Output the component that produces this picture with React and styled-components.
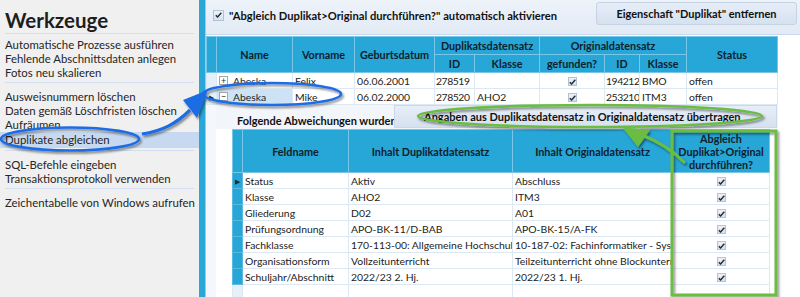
import React from 'react';
import styled, { createGlobalStyle } from 'styled-components';

const GlobalStyle = createGlobalStyle`
  html, body { margin: 0; padding: 0; background: #ffffff; }
  body { font-family: Lato, "Noto Sans", sans-serif; color: #1b1b1b; }
  * { box-sizing: border-box; }
`;

const HEADER_BLUE = '#27a6d8';
const LINE = '#dce8f3';

const sidebarGroups = [
	['Automatische Prozesse ausführen', 'Fehlende Abschnittsdaten anlegen', 'Fotos neu skalieren'],
	['Ausweisnummern löschen', 'Daten gemäß Löschfristen löschen', 'Aufräumen', 'Duplikate abgleichen'],
	['SQL-Befehle eingeben', 'Transaktionsprotokoll verwenden'],
	['Zeichentabelle von Windows aufrufen'],
];

const persons = [
	{ sign: '+', name: 'Abeska', first: 'Felix', born: '06.06.2001', dupId: '278519', dupClass: '', origId: '194212', origClass: 'BMO', status: 'offen' },
	{ sign: '−', name: 'Abeska', first: 'Mike', born: '06.02.2000', dupId: '278520', dupClass: 'AHO2', origId: '253210', origClass: 'ITM3', status: 'offen', current: true },
];

const diffs = [
	['Status', 'Aktiv', 'Abschluss'],
	['Klasse', 'AHO2', 'ITM3'],
	['Gliederung', 'D02', 'A01'],
	['Prüfungsordnung', 'APO-BK-11/D-BAB', 'APO-BK-15/A-FK'],
	['Fachklasse', '170-113-00: Allgemeine Hochschulreife', '10-187-02: Fachinformatiker - Systemintegration'],
	['Organisationsform', 'Vollzeitunterricht', 'Teilzeitunterricht ohne Blockunterricht'],
	['Schuljahr/Abschnitt', '2022/23 2. Hj.', '2022/23 1. Hj.'],
];

const Page = styled.div`
	position: relative;
	width: 800px;
	height: 297px;
	display: flex;
	overflow: hidden;
	background: #ffffff;
`;

const Sidebar = styled.aside`
	width: 199px;
	flex-shrink: 0;
	background: #f0f0f0;
	padding-top: 9px;
`;

const SideTitle = styled.h1`
	margin: 0 5px;
	padding: 1px 0 2px;
	font-size: 20.5px;
	font-weight: 700;
	line-height: 21px;
	color: #1e1e1e;
	border-bottom: 1px solid #d2dff0;
`;

const SideGroup = styled.ul`
	list-style: none;
	margin: 0 5px;
	padding: ${(p) => (p.first ? '4px 0 2px' : '7px 0 2px')};
	border-bottom: ${(p) => (p.last ? 'none' : '1px solid #d2dff0')};
`;

const SideItem = styled.li`
	margin: 0 -5px;
	padding: 0 5px;
	font-size: 11.4px;
	line-height: 14px;
	white-space: nowrap;
	color: #262626;
	background: ${(p) => (p.active ? '#c6d9f0' : 'transparent')};
	${(p) => p.active && 'padding-top: 1px; padding-bottom: 1px;'}
`;

const Splitter = styled.div`
	width: 7px;
	flex-shrink: 0;
	background: #29a7d9;
	border-right: 1px solid #8fd0ee;
`;

const Main = styled.main`
	flex: 1;
	display: flex;
	flex-direction: column;
	min-width: 0;
`;

const TopBar = styled.div`
	height: 35px;
	flex-shrink: 0;
	display: flex;
	align-items: center;
	padding: 0 3px 4px 7px;
	background: linear-gradient(#eef3fa, #e2eaf5);
	border-bottom: 1px solid #ccd9ea;
`;

const CheckLabel = styled.label`
	display: flex;
	align-items: center;
	gap: 5px;
	font-size: 11.2px;
	font-weight: 700;
	color: #111;
	white-space: nowrap;
`;

const Spacer = styled.div`
	flex: 1;
`;

const Button = styled.button`
	height: 23px;
	padding: 0 10px;
	font-family: inherit;
	font-size: 11px;
	font-weight: 700;
	color: #111;
	white-space: nowrap;
	border: 1px solid #c4d2e3;
	border-radius: 3px;
	background: linear-gradient(#e6eef8, #d6e1ef);
`;

const TopButton = styled(Button)`
	width: 201px;
	margin-top: -4px;
`;

const GridArea = styled.div`
	flex: 1;
	min-height: 0;
	padding-top: 1px;
	display: flex;
	flex-direction: column;
	width: 572px;
`;

const Table = styled.table`
	border-collapse: collapse;
	table-layout: fixed;
	font-size: 10.4px;
	width: ${(p) => p.w}px;
	flex-shrink: 0;
`;

const Th = styled.th`
	background: ${HEADER_BLUE};
	color: #10202a;
	font-weight: 700;
	font-size: 10.8px;
	line-height: 13px;
	height: ${(p) => p.h || 18}px;
	padding: 0 2px;
	border: 1px solid #79c6e8;
	text-align: center;
	white-space: nowrap;
`;

const Td = styled.td`
	height: 16px;
	padding: 0 ${(p) => (p.tight ? 1 : 2)}px;
	line-height: 14px;
	border: 1px solid ${LINE};
	white-space: nowrap;
	overflow: hidden;
	text-overflow: clip;
	text-align: ${(p) => (p.center ? 'center' : 'left')};
	background: ${(p) => (p.selected ? '#cde2f4' : '#ffffff')};
	color: #222;
	letter-spacing: ${(p) => (p.tight ? '-0.45px' : 'normal')};
`;

const RowHead = styled.td`
	height: 16px;
	padding: 0;
	border: 1px solid ${(p) => (p.blue ? '#5cb9e2' : LINE)};
	background: ${(p) => (p.blue ? HEADER_BLUE : '#e6f0f9')};
	text-align: center;
	font-size: 7px;
	line-height: 14px;
	color: #1d2e3a;
`;

const NameInner = styled.span`
	display: flex;
	align-items: center;
	gap: 5px;
`;

const ExpandBox = styled.span`
	width: 9px;
	height: 9px;
	border: 1px solid #a6a6a6;
	background: #fff;
	font-size: 9px;
	line-height: 7px;
	text-align: center;
	color: #333;
	flex-shrink: 0;
`;

const CheckBox = styled.span`
	display: inline-flex;
	align-items: center;
	justify-content: center;
	width: ${(p) => p.size || 9}px;
	height: ${(p) => p.size || 9}px;
	border: 1px solid #b3c3d6;
	background: linear-gradient(#eef3f9, #d5e0ec);
	vertical-align: middle;
`;

const Detail = styled.div`
	flex: 1;
	display: flex;
	flex-direction: column;
	padding-left: 16px;
	border-left: 10px solid #f4f8fc;
	background: #ffffff;
`;

const DetailBar = styled.div`
	height: 24px;
	flex-shrink: 0;
	display: flex;
	align-items: flex-end;
	background: #f2f5f9;
	margin-left: -16px;
	padding-left: 21px;
`;

const DetailLabel = styled.div`
	width: 157px;
	overflow: hidden;
	white-space: nowrap;
	font-size: 11px;
	font-weight: 700;
	line-height: 17px;
	color: #111;
`;

const CopyButton = styled(Button)`
	width: 383px;
	height: 23px;
	border-radius: 0;
	border-color: #cbd8e7;
	padding-left: 29px;
	text-align: left;
	align-self: flex-start;
`;

const Annotations = styled.svg`
	position: absolute;
	left: 0;
	top: 0;
	pointer-events: none;
`;

function Check({ size }) {
	return (
		<CheckBox size={size}>
			<svg width="7" height="6" viewBox="0 0 7 6">
				<path d="M0.8 3.2 L2.6 5 L6.3 0.8" fill="none" stroke="#1c2a3a" strokeWidth="1.4" />
			</svg>
		</CheckBox>
	);
}

function Overlay() {
	return (
		<Annotations width="800" height="297" viewBox="0 0 800 297">
			<defs>
				<filter id="sh" x="-10%" y="-30%" width="120%" height="160%">
					<feDropShadow dx="1.5" dy="2" stdDeviation="1.2" floodColor="#000" floodOpacity="0.45" />
				</filter>
			</defs>
			<g filter="url(#sh)" fill="none" strokeWidth="2.6">
				<ellipse cx="70" cy="139" rx="69" ry="11.5" stroke="#1e6de3" />
				<ellipse cx="272" cy="94" rx="69" ry="11" stroke="#1e6de3" />
				<path d="M142 134 C 162 131, 176 124, 190 110" stroke="#1e6de3" strokeWidth="3.2" />
				<polygon points="208,90 183,100 197,118" fill="#1e6de3" stroke="none" />
				<ellipse cx="590" cy="116" rx="172" ry="11" stroke="#6bbd43" />
				<rect x="672" y="131" width="104" height="164" stroke="#6bbd43" strokeWidth="3" />
				<path d="M685 163 C 672 150, 660 142, 644 136" stroke="#6bbd43" strokeWidth="3" />
				<polygon points="622,127 650,130 638,147" fill="#6bbd43" stroke="none" />
			</g>
		</Annotations>
	);
}

export default function App() {
	return (
		<>
			<GlobalStyle />
			<Page>
				<Sidebar>
					<SideTitle>Werkzeuge</SideTitle>
					{sidebarGroups.map((group, gi) => (
						<SideGroup key={gi} first={gi === 0} last={gi === sidebarGroups.length - 1}>
							{group.map((item) => (
								<SideItem key={item} active={item === 'Duplikate abgleichen'}>
									{item}
								</SideItem>
							))}
						</SideGroup>
					))}
				</Sidebar>
				<Splitter />
				<Main>
					<TopBar>
						<CheckLabel>
							<Check size={11} />
							"Abgleich Duplikat&gt;Original durchführen?" automatisch aktivieren
						</CheckLabel>
						<Spacer />
						<TopButton>Eigenschaft "Duplikat" entfernen</TopButton>
					</TopBar>
					<GridArea>
						<Table w={571}>
							<colgroup>
								<col style={{ width: 10 }} />
								<col style={{ width: 76 }} />
								<col style={{ width: 62 }} />
								<col style={{ width: 80 }} />
								<col style={{ width: 40 }} />
								<col style={{ width: 65 }} />
								<col style={{ width: 65 }} />
								<col style={{ width: 35 }} />
								<col style={{ width: 47 }} />
								<col style={{ width: 91 }} />
							</colgroup>
							<thead>
								<tr>
									<Th rowSpan={2} />
									<Th rowSpan={2}>Name</Th>
									<Th rowSpan={2}>Vorname</Th>
									<Th rowSpan={2}>Geburtsdatum</Th>
									<Th colSpan={2}>Duplikatsdatensatz</Th>
									<Th colSpan={3}>Originaldatensatz</Th>
									<Th rowSpan={2}>Status</Th>
								</tr>
								<tr>
									<Th>ID</Th>
									<Th>Klasse</Th>
									<Th>gefunden?</Th>
									<Th>ID</Th>
									<Th>Klasse</Th>
								</tr>
							</thead>
							<tbody>
								{persons.map((p) => (
									<tr key={p.dupId}>
										<RowHead>{p.current ? '▶' : ''}</RowHead>
										<Td selected={p.current}>
											<NameInner>
												<ExpandBox>{p.sign}</ExpandBox>
												{p.name}
											</NameInner>
										</Td>
										<Td>{p.first}</Td>
										<Td>{p.born}</Td>
										<Td tight>{p.dupId}</Td>
										<Td>{p.dupClass}</Td>
										<Td center>
											<Check />
										</Td>
										<Td tight>{p.origId}</Td>
										<Td>{p.origClass}</Td>
										<Td>{p.status}</Td>
									</tr>
								))}
							</tbody>
						</Table>
						<Detail>
							<DetailBar>
								<DetailLabel>Folgende Abweichungen wurden gefunden:</DetailLabel>
								<CopyButton>Angaben aus Duplikatsdatensatz in Originaldatensatz übertragen</CopyButton>
							</DetailBar>
							<Table w={537}>
								<colgroup>
									<col style={{ width: 10 }} />
									<col style={{ width: 106 }} />
									<col style={{ width: 164 }} />
									<col style={{ width: 160 }} />
									<col style={{ width: 97 }} />
								</colgroup>
								<thead>
									<tr>
										<Th h={43} />
										<Th h={43}>Feldname</Th>
										<Th h={43}>Inhalt Duplikatdatensatz</Th>
										<Th h={43}>Inhalt Originaldatensatz</Th>
										<Th h={43}>
											Abgleich
											<br />
											Duplikat&gt;Original
											<br />
											durchführen?
										</Th>
									</tr>
								</thead>
								<tbody>
									{diffs.map(([field, dup, orig], i) => (
										<tr key={field}>
											<RowHead blue>{i === 0 ? '▶' : ''}</RowHead>
											<Td>{field}</Td>
											<Td>{dup}</Td>
											<Td>{orig}</Td>
											<Td center>
												<Check />
											</Td>
										</tr>
									))}
									<tr>
										<RowHead />
										<Td />
										<Td />
										<Td />
										<Td />
									</tr>
								</tbody>
							</Table>
						</Detail>
					</GridArea>
				</Main>
				<Overlay />
			</Page>
		</>
	);
}
